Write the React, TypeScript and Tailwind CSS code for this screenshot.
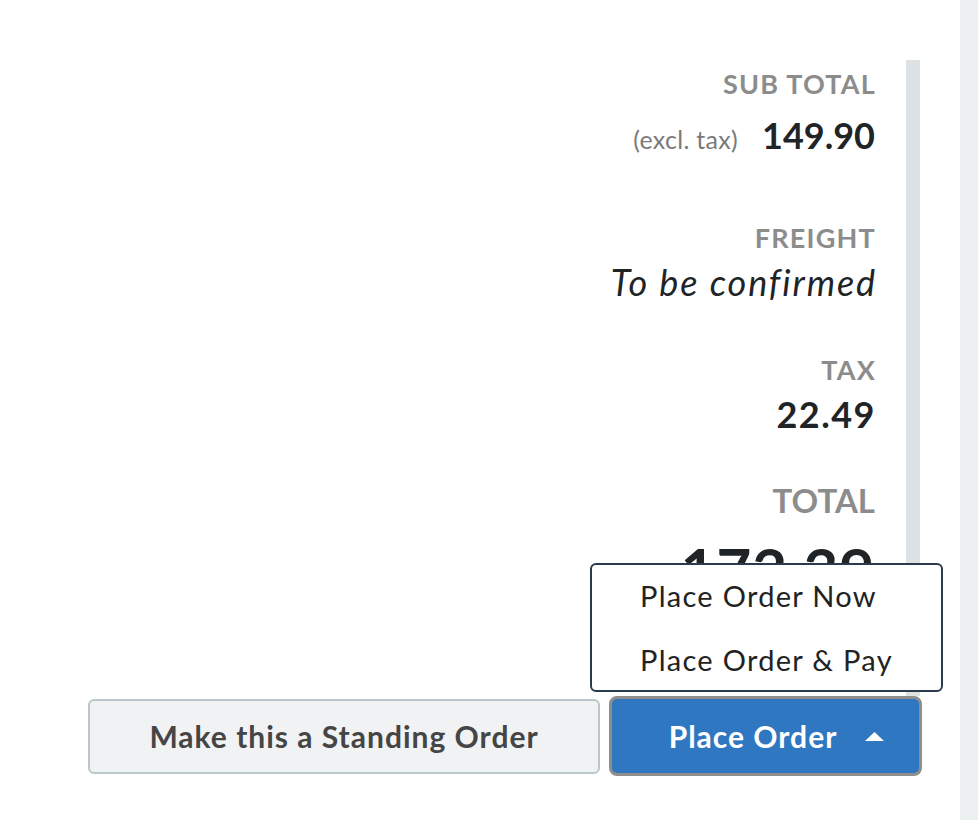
import React from 'react';

const font = { fontFamily: 'Lato, "Noto Sans", sans-serif' };

export default function App() {
  return (
    <div className="flex min-h-[820px] bg-white" style={font}>
      <div className="flex-1 flex flex-col pt-[60px]">
        {/* Summary with scroll track */}
        <div className="flex h-[636px] overflow-hidden pr-[40px]">
          <div className="flex-1 flex flex-col items-end pr-[31px] pt-[10px]">
            <div className="text-[27px] leading-[28px] font-bold text-[#8c8c8c] uppercase tracking-[1.2px] mr-[-1px]">Sub Total</div>
            <div className="mt-[17px] flex items-baseline gap-[24px]">
              <span className="text-[25px] text-[#7a7a7a] tracking-[0.3px]">(excl. tax)</span>
              <span className="text-[36px] leading-[40px] font-bold text-[#212427]">149.90</span>
            </div>
            <div className="mt-[65px] text-[27px] leading-[28px] font-bold text-[#8c8c8c] uppercase tracking-[1.2px] mr-[-1px]">Freight</div>
            <div className="mt-[10px] text-[36px] leading-[40px] italic text-[#212427] tracking-[1.9px] mr-[-2px]">To be confirmed</div>
            <div className="mt-[54px] text-[27px] leading-[28px] font-bold text-[#8c8c8c] uppercase tracking-[1.2px] mr-[-1px]">Tax</div>
            <div className="mt-[10px] text-[36px] leading-[40px] font-bold text-[#212427] tracking-[1.5px] mr-[-1px]">22.49</div>
            <div className="mt-[49px] text-[33px] leading-[34px] font-bold text-[#8c8c8c] uppercase">Total</div>
            <div className="mt-[22px] text-[60px] leading-[60px] font-bold text-[#212427] tracking-[1px]">172.39</div>
          </div>
          <div className="w-[14px] bg-[#dde2e5]" />
        </div>

        {/* Buttons */}
        <div className="flex items-center justify-end gap-[9px] pr-[38px] pl-[88px]">
          <button className="w-[512px] h-[75px] rounded-md border-2 border-[#bac7cb] bg-[#f1f2f4] text-[30px] font-bold text-[#454545] tracking-[1px]">
            Make this a Standing Order
          </button>
          <div className="relative">
            <div className="absolute bottom-full mb-[4px] left-[-19px] w-[353px] h-[129px] rounded-md border-2 border-[#2c3b4c] bg-white flex flex-col justify-center gap-[24px] pl-[48px] text-[29px] leading-[40px] text-[#222] tracking-[1.3px]">
              <div>Place Order Now</div>
              <div>Place Order &amp; Pay</div>
            </div>
            <button className="w-[313px] h-[80px] rounded-lg border-[3px] border-[#8e8e8e] bg-[#2f78c1] text-white text-[30px] font-bold tracking-[1px] flex items-center justify-center gap-[28px] pl-[22px]">
              <span>Place Order</span>
              <svg width="19" height="9" viewBox="0 0 19 9">
                <polygon points="9.5,0 19,9 0,9" fill="white" />
              </svg>
            </button>
          </div>
        </div>
      </div>
      <div className="w-[18px] bg-[#edf0f1]" />
    </div>
  );
}
